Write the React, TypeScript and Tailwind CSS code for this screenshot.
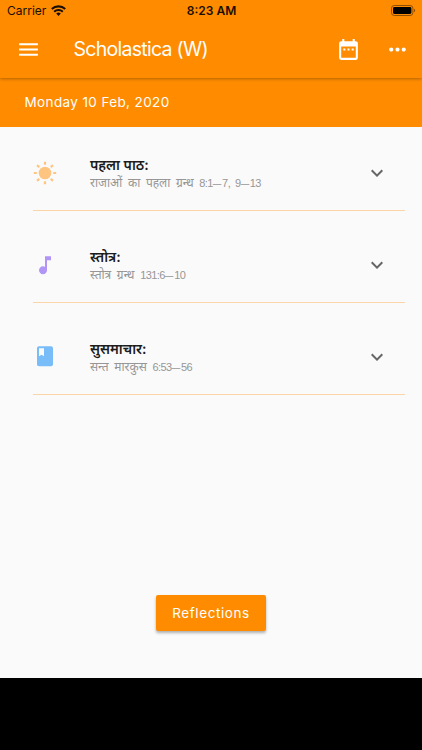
import React, { useState } from 'react'
import { MdMenu, MdDateRange, MdMoreHoriz, MdMusicNote, MdBook, MdExpandMore } from 'react-icons/md'

const SunIcon = () => (
  <svg width="24" height="24" viewBox="0 0 24 24" fill="none" stroke="#ffc580" strokeWidth="2.2">
    <circle cx="12" cy="12" r="6.3" fill="#ffc580" stroke="none" />
    <path d="M12 0.8v3M12 20.2v3M0.8 12h3M20.2 12h3M4.1 4.1l2.1 2.1M17.8 17.8l2.1 2.1M4.1 19.9l2.1-2.1M17.8 6.2l2.1-2.1" />
  </svg>
)

const WifiIcon = () => (
  <svg width="15" height="11" viewBox="0 0 15 11" fill="none" stroke="#1a0e00" strokeWidth="2.1">
    <path d="M0.8 4.1a9.6 9.6 0 0 1 13.4 0" />
    <path d="M3.2 6.7a6.1 6.1 0 0 1 8.6 0" />
    <path d="M7.5 11L5.2 8.6a3.3 3.3 0 0 1 4.6 0z" fill="#1a0e00" stroke="none" />
  </svg>
)

const BatteryIcon = () => (
  <svg width="25" height="11" viewBox="0 0 25 11">
    <rect x="0.5" y="0.5" width="21.4" height="10" rx="2.8" fill="none" stroke="#8f4e00" />
    <rect x="2" y="2" width="18.4" height="7" rx="1.4" fill="#000" />
    <path d="M23 3.8c1.6.6 1.6 2.8 0 3.4z" fill="#8f4e00" />
  </svg>
)

// verse numbers, with the dashes drawn wider than the font has them
const Verses = ({ text }: { text: string }) => (
  <span className="text-[11px] tracking-[-0.55px]">
    {text.split('–').map((part, index) => (
      <React.Fragment key={index}>
        {index > 0 && <span className="mr-[1.7px] ml-[1.4px] inline-block scale-x-140 tracking-normal">–</span>}
        {part}
      </React.Fragment>
    ))}
  </span>
)

const readings = [
  {
    id: 'first',
    title: 'पहला पाठ:',
    book: 'राजाओं का पहला ग्रन्थ',
    verses: '8:1–7, 9–13',
    icon: <SunIcon />,
  },
  {
    id: 'psalm',
    title: 'स्तोत्र:',
    book: 'स्तोत्र ग्रन्थ',
    verses: '131:6–10',
    icon: <MdMusicNote size={24.5} color="#b094f6" className="mt-px" />,
  },
  {
    id: 'gospel',
    title: 'सुसमाचार:',
    book: 'सन्त मारकुस',
    verses: '6:53–56',
    icon: <MdBook size={24.5} color="#78bcf8" />,
  },
]

export default function App() {
  const [openId, setOpenId] = useState<string | null>(null)

  return (
    <div className="flex h-[750px] w-[422px] flex-col overflow-hidden bg-black font-['Inter','Noto_Sans',sans-serif]">
      <header className="z-10 h-[78px] shrink-0 bg-[#ff8c00] shadow-[0_1px_3px_rgba(0,0,0,0.3)]">
        {/* status bar */}
        <div className="grid h-[21px] grid-cols-3 items-center pr-[6px] pl-[7px] text-[12px] text-[#1a0e00]">
          <div className="flex items-center gap-[5px]">
            <span className="pt-px text-[12px]">Carrier</span>
            <WifiIcon />
          </div>
          <span className="pt-px text-center font-semibold">8:23 AM</span>
          <div className="flex justify-end">
            <BatteryIcon />
          </div>
        </div>
        <div className="flex h-[57px] items-center pr-[12px] pl-[16px] text-white">
          <MdMenu size={25} />
          <h1 className="ml-[32.5px] flex-1 pt-px text-[19.5px] tracking-[-0.72px]">Scholastica (W)</h1>
          <MdDateRange size={25} />
          <MdMoreHoriz size={25} className="ml-[24px]" />
        </div>
      </header>

      <div className="flex h-[49px] shrink-0 items-center bg-[#ff8c00] pl-[24.5px] text-[13.5px] tracking-[0.38px] text-white">
        Monday 10 Feb, 2020
      </div>

      <main className="flex h-[551px] shrink-0 flex-col bg-[#fafafa]">
        <ul className="pr-[17px] pl-[33px]">
          {readings.map(item => (
            <li
              key={item.id}
              className="flex h-[92px] items-center border-b border-[#fbd5a8] pr-[16px] first:h-[84px] first:pt-0 not-first:pt-[8px]"
              onClick={() => setOpenId(openId === item.id ? null : item.id)}
            >
              <div className="flex w-[24px] justify-center pt-[8px]">{item.icon}</div>
              <div className="ml-[33px] flex-1 pt-[10px]">
                <p className="text-[14px] leading-[19px] font-semibold text-[#1c1c1c]">{item.title}</p>
                <p className="font-['Liberation_Sans','Noto_Sans',sans-serif] text-[12px] leading-[18px] [word-spacing:2.3px] text-[#969696]">
                  {item.book} <Verses text={item.verses} />
                </p>
              </div>
              <div className="pt-[8px]">
                <MdExpandMore size={24} color="#666" />
              </div>
            </li>
          ))}
        </ul>
        <button className="mx-auto mt-auto mb-[47px] h-[36px] w-[110px] rounded-[2px] bg-[#ff8c00] text-[13.5px] tracking-[0.6px] text-white shadow-[0_2px_3px_rgba(0,0,0,0.3)]">
          Reflections
        </button>
      </main>
    </div>
  )
}
